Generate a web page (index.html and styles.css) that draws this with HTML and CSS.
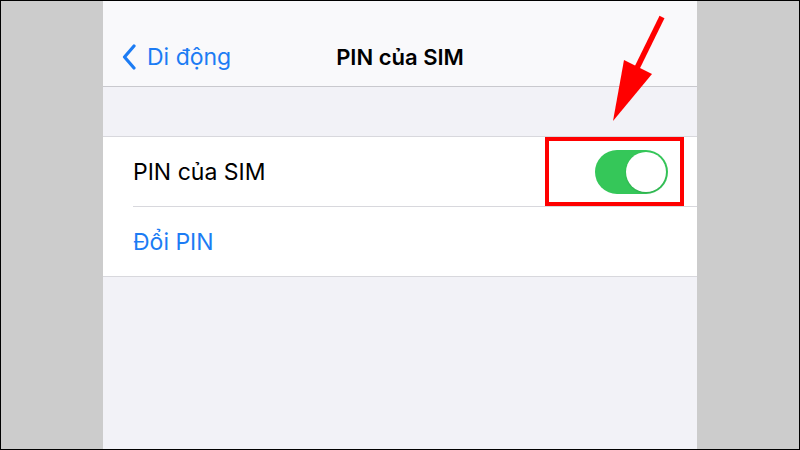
FILE: index.html
```html
<!DOCTYPE html>
<html lang="vi">
<head>
  <meta charset="UTF-8" />
  <meta name="viewport" content="width=device-width, initial-scale=1.0" />
  <title>PIN của SIM</title>
  <link rel="stylesheet" href="styles.css">
</head>
<body>
  <div class="frame">
    <div class="side"></div>

    <div class="phone">
      <!-- Navigation bar -->
      <div class="navbar">
        <a class="back">
          <svg class="chevron" width="14" height="26" viewBox="0 0 14 26">
            <path d="M12 2 L2.5 13 L12 24" fill="none" stroke="#1c7cf4" stroke-width="3.2" stroke-linecap="round" stroke-linejoin="round"/>
          </svg>
          <span>Di động</span>
        </a>
        <div class="title">PIN của SIM</div>
        <div class="nav-right"></div>
      </div>

      <div class="spacer"></div>

      <!-- Settings group -->
      <div class="group">
        <div class="row">
          <div class="row-inner">
            <span class="label">PIN của SIM</span>
            <div class="toggle on"><div class="knob"></div></div>
          </div>
        </div>
        <div class="row">
          <div class="row-inner last">
            <span class="label link">Đổi PIN</span>
          </div>
        </div>
      </div>

      <div class="rest"></div>
    </div>

    <div class="side"></div>

    <!-- Annotation -->
    <div class="highlight"></div>
    <svg class="arrow" width="800" height="450" viewBox="0 0 800 450">
      <line x1="662" y1="17" x2="637" y2="68" stroke="#ff0000" stroke-width="5.5"/>
      <polygon points="613,121 624,60 652,74" fill="#ff0000"/>
    </svg>
  </div>
</body>
</html>
```

FILE: styles.css
```css
* { box-sizing: border-box; }
body { margin: 0; font-family: Inter, "Liberation Sans", sans-serif; }
.frame { position: relative; width: 800px; height: 450px; border: 1px solid #000; display: flex; overflow: hidden; }
.side { width: 102px; background: #cccccc; flex-shrink: 0; }
.phone { width: 594px; display: flex; flex-direction: column; background: #f2f2f7; }

.navbar { height: 86px; padding-top: 26px; background: #f9f9fb; border-bottom: 1px solid #c9c9ce; display: grid; grid-template-columns: 1fr auto 1fr; align-items: center; }
.back { display: flex; align-items: center; gap: 11px; margin-left: 19px; color: #1c7cf4; font-size: 23px; }
.title { font-size: 22px; font-weight: 600; color: #000; }

.spacer { height: 50px; border-bottom: 1px solid #d8d8dd; }

.group { background: #fff; border-bottom: 1px solid #d8d8dd; }
.row { padding-left: 30px; }
.row-inner { height: 70px; display: flex; align-items: center; justify-content: space-between; padding-right: 29px; border-bottom: 1px solid #d8d8dd; }
.row-inner.last { border-bottom: none; height: 69px; }
.label { font-size: 23px; color: #000; }
.label.link { color: #1c7cf4; }

.toggle { width: 73px; height: 44px; border-radius: 22px; background: #e5e5ea; position: relative; }
.toggle.on { background: #35c759; }
.knob { position: absolute; top: 2px; right: 2px; width: 40px; height: 40px; border-radius: 50%; background: #fff; box-shadow: 0 1px 2px rgba(0, 0, 0, 0.15); }

.rest { flex: 1; }

.highlight { position: absolute; left: 544px; top: 136px; width: 139px; height: 69px; border: 4px solid #ff0000; }
.arrow { position: absolute; left: -1px; top: -1px; }
```
